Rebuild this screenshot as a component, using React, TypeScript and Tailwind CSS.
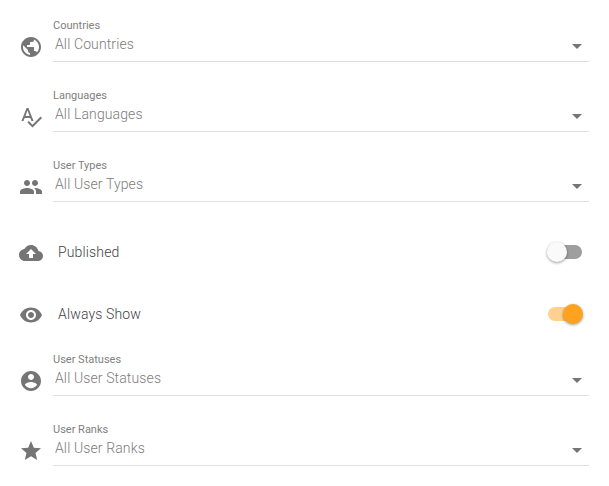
import React from 'react'

const icons = {
  globe:
    'M12 2C6.48 2 2 6.48 2 12s4.48 10 10 10 10-4.48 10-10S17.52 2 12 2zm-1 17.93c-3.95-.49-7-3.85-7-7.93 0-.62.08-1.21.21-1.79L9 15v1c0 1.1.9 2 2 2v1.93zm6.9-2.54c-.26-.81-1-1.39-1.9-1.39h-1v-3c0-.55-.45-1-1-1H8v-2h2c.55 0 1-.45 1-1V7h2c1.1 0 2-.9 2-2v-.41c2.93 1.19 5 4.06 5 7.41 0 2.08-.8 3.97-2.1 5.39z',
  spellcheck:
    'M12.45 16h2.09L9.43 3H7.57L2.46 16h2.09l1.12-3h5.64l1.14 3zm-6.02-5L8.5 5.48 10.57 11H6.43zm15.16.59l-8.09 8.09L9.83 16l-1.41 1.41 5.09 5.09L23 13l-1.41-1.41z',
  people:
    'M16 11c1.66 0 2.99-1.34 2.99-3S17.66 5 16 5c-1.66 0-3 1.34-3 3s1.34 3 3 3zm-8 0c1.66 0 2.99-1.34 2.99-3S9.66 5 8 5C6.34 5 5 6.34 5 8s1.34 3 3 3zm0 2c-2.33 0-7 1.17-7 3.5V19h14v-2.5c0-2.33-4.67-3.5-7-3.5zm8 0c-.29 0-.62.02-.97.05 1.16.84 1.97 1.97 1.97 3.45V19h6v-2.5c0-2.33-4.67-3.5-7-3.5z',
  cloud:
    'M19.35 10.04C18.67 6.59 15.64 4 12 4 9.11 4 6.6 5.64 5.35 8.04 2.34 8.36 0 10.91 0 14c0 3.31 2.69 6 6 6h13c2.76 0 5-2.24 5-5 0-2.64-2.05-4.78-4.65-4.96zM14 13v4h-4v-4H7l5-5 5 5h-3z',
  eye: 'M12 4.5C7 4.5 2.73 7.61 1 12c1.73 4.39 6 7.5 11 7.5s9.27-3.11 11-7.5c-1.73-4.39-6-7.5-11-7.5zM12 17c-2.76 0-5-2.24-5-5s2.24-5 5-5 5 2.24 5 5-2.24 5-5 5zm0-8c-1.66 0-3 1.34-3 3s1.34 3 3 3 3-1.34 3-3-1.34-3-3-3z',
  account:
    'M12 2C6.48 2 2 6.48 2 12s4.48 10 10 10 10-4.48 10-10S17.52 2 12 2zm0 3c1.66 0 3 1.34 3 3s-1.34 3-3 3-3-1.34-3-3 1.34-3 3-3zm0 14.2c-2.5 0-4.71-1.28-6-3.22.03-1.99 4-3.08 6-3.08 1.99 0 5.97 1.09 6 3.08-1.29 1.94-3.5 3.22-6 3.22z',
  star: 'M12 17.27L18.18 21l-1.64-7.03L22 9.24l-7.19-.61L12 2 9.19 8.63 2 9.24l5.46 4.73L5.82 21z',
}

const Icon: React.FC<{ d: string }> = ({ d }) => (
  <svg viewBox="0 0 24 24" className="w-6 h-6 shrink-0 fill-[#757575]">
    <path d={d} />
  </svg>
)

const SelectField: React.FC<{ icon: string; label: string; value: string }> = ({
  icon,
  label,
  value,
}) => (
  <div className="flex gap-2.5 mb-[26px]">
    <div className="mt-[17px]">
      <Icon d={icon} />
    </div>
    <div className="flex-1">
      <div className="h-3.5 text-[11px] leading-4 text-[#808080]">{label}</div>
      <div className="flex items-center justify-between h-[30px] border-b border-[#e0e0e0] pl-0.5 pr-[7px]">
        <span className="text-sm font-light text-[#7c7c7c] tracking-[0.12px] -mt-[5px]">{value}</span>
        <span className="w-0 h-0 border-x-[5px] border-x-transparent border-t-[5px] border-t-[#757575]" />
      </div>
    </div>
  </div>
)

const ToggleRow: React.FC<{ icon: string; label: string; on?: boolean }> = ({ icon, label, on }) => (
  <div className="flex items-center h-12 mb-3.5">
    <div className="mt-0.5">
      <Icon d={icon} />
    </div>
    <span className="ml-[15px] flex-1 text-sm font-light text-[#424242] tracking-[0.15px]">{label}</span>
    <div className="relative w-[34px] h-3.5 mr-[7px]">
      <div className={`h-full rounded-full ${on ? 'bg-[#ffd08f]' : 'bg-[#9e9e9e]'}`} />
      <div
        className={`absolute -top-[3px] w-5 h-5 rounded-full shadow-[0_1px_3px_rgba(0,0,0,0.4)] ${
          on ? 'right-[-1px] bg-[#ffa21f]' : 'left-[-1px] bg-[#fafafa]'
        }`}
      />
    </div>
  </div>
)

export default function App() {
  return (
    <div className="w-[609px] h-[486px] bg-white pt-[18px] pl-[19px] pr-5 overflow-hidden font-['Roboto',sans-serif]">
      <SelectField icon={icons.globe} label="Countries" value="All Countries" />
      <SelectField icon={icons.spellcheck} label="Languages" value="All Languages" />
      <SelectField icon={icons.people} label="User Types" value="All User Types" />
      <ToggleRow icon={icons.cloud} label="Published" />
      <ToggleRow icon={icons.eye} label="Always Show" on />
      <SelectField icon={icons.account} label="User Statuses" value="All User Statuses" />
      <SelectField icon={icons.star} label="User Ranks" value="All User Ranks" />
    </div>
  )
}
